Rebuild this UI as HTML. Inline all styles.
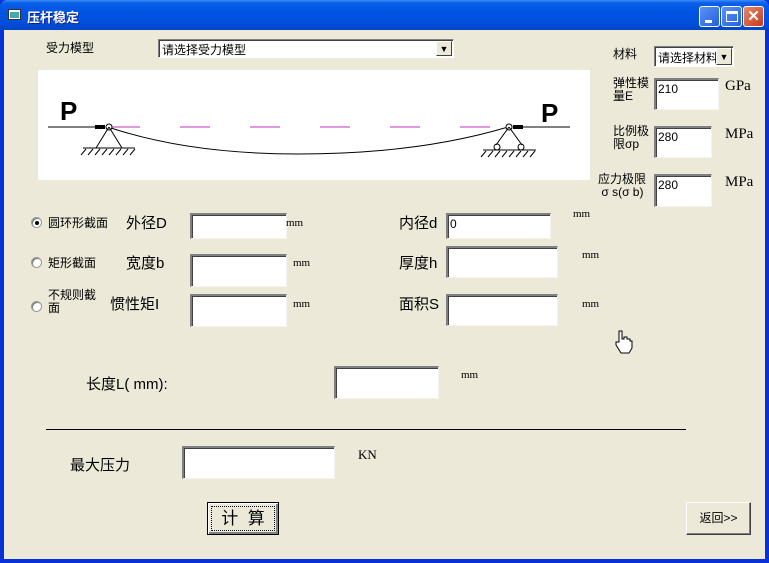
<!DOCTYPE html>
<html><head><meta charset="utf-8"><style>
*{margin:0;padding:0;box-sizing:border-box}
body{width:769px;height:563px;overflow:hidden;background:#0831d9;font-family:"Liberation Sans","Noto Sans CJK SC",sans-serif;font-size:12px;color:#000;position:relative}
#tb{position:absolute;left:0;top:0;width:769px;height:30px;background:linear-gradient(#3d8bf7 0,#0a5fe8 3px,#0054e3 12px,#0050dc 22px,#0344c6 30px);border-radius:7px 7px 0 0}
#tt{position:absolute;left:27px;top:7px;color:#fff;font-weight:bold;font-size:13px;text-shadow:1px 1px #0a1f8f}
#body{position:absolute;left:4px;top:30px;width:761px;height:529px;background:#ece9d8}
.a{position:absolute;white-space:nowrap}
.in{position:absolute;background:#fff;border-top:2px solid #808080;border-left:2px solid #808080;border-right:1px solid #f4f3ee;border-bottom:1px solid #f4f3ee;box-shadow:inset 1px 1px #404040;font-size:12px;padding:2px 0 0 2px}
.btn{position:absolute;width:21px;height:21px;border:1px solid #fff;border-radius:3px;background:linear-gradient(135deg,#5a92f5,#2460dc)}
.big{font-size:15px}
.sm{font-size:11px;font-family:"Liberation Serif",serif}
.rad{position:absolute;width:11px;height:11px;border-radius:50%;background:#fff;border:1px solid #999;box-shadow:inset 1px 1px #777}
.cb{position:absolute;background:#fff;border-top:1px solid #808080;border-left:1px solid #808080;border-bottom:1px solid #fff;border-right:1px solid #fff;box-shadow:inset 1px 1px #404040;padding:1px 3px;white-space:nowrap;overflow:hidden}
.dd{position:absolute;top:1px;right:1px;width:16px;bottom:1px;background:#ece9d8;border:1px solid;border-color:#fff #404040 #404040 #fff;font-size:9px;text-align:center;line-height:15px}
.pb{position:absolute;background:#ece9d8;border:1px solid;border-color:#fff #404040 #404040 #fff;box-shadow:inset -1px -1px #808080;text-align:center;white-space:nowrap}
</style></head><body>
<div id="tb">
<svg class="a" style="left:8px;top:9px" width="14" height="12"><rect x="0.5" y="0.5" width="12" height="10" fill="#fff" stroke="#333"/><rect x="2" y="3" width="9" height="6" fill="#4aa"/></svg>
<div id="tt">压杆稳定</div>
<div class="btn" style="left:699px;top:6px"><div style="position:absolute;left:5px;top:13px;width:7px;height:3px;background:#fff"></div></div>
<div class="btn" style="left:721px;top:6px"><div style="position:absolute;left:4px;top:4px;width:12px;height:11px;border:1px solid #fff;border-top-width:3px"></div></div>
<div class="btn" style="left:743px;top:6px;background:linear-gradient(135deg,#e88a6a,#c8391a);color:#fff;font-weight:bold;font-size:15px;text-align:center;line-height:19px">✕</div>
</div>
<div id="body"></div>
<div class="a" style="left:46px;top:39px">受力模型</div>
<div class="cb" style="left:158px;top:39px;width:296px;height:19px">请选择受力模型<div class="dd">▼</div></div>
<div class="a" style="left:613px;top:45px">材料</div>
<div class="cb" style="left:654px;top:46px;width:80px;height:21px;padding-top:2px">请选择材料<div class="dd" style="line-height:17px">▼</div></div>
<svg class="a" style="left:38px;top:70px" width="552" height="110">
<rect width="552" height="110" fill="#fff"/>
<text x="22" y="50" font-family="Liberation Sans" font-weight="bold" font-size="26">P</text>
<text x="503" y="52" font-family="Liberation Sans" font-weight="bold" font-size="26">P</text>
<line x1="10" y1="57" x2="60" y2="57" stroke="#000"/>
<rect x="57" y="55" width="10" height="4" fill="#000"/>
<line x1="532" y1="57" x2="482" y2="57" stroke="#000"/>
<rect x="475" y="55" width="10" height="4" fill="#000"/>
<line x1="72" y1="57" x2="470" y2="57" stroke="#c030c0" stroke-dasharray="30,40"/>
<path d="M70 57 Q150 84 260 84 Q380 84 470 57" fill="none" stroke="#000"/>
<circle cx="71" cy="57" r="3" fill="#fff" stroke="#000"/>
<circle cx="471" cy="57" r="3" fill="#fff" stroke="#000"/>
<path d="M71 57 L58 78 M71 57 L84 78 M45 78 H97" stroke="#000" fill="none"/>
<path d="M471 57 L458 75 M471 57 L484 75 M445 80 H498" stroke="#000" fill="none"/>
<circle cx="459" cy="77" r="3" fill="none" stroke="#000"/><circle cx="483" cy="77" r="3" fill="none" stroke="#000"/>
<path d="M48 79 l-5 6 M55 79 l-5 6 M62 79 l-5 6 M69 79 l-5 6 M76 79 l-5 6 M83 79 l-5 6 M90 79 l-5 6 M97 79 l-5 6 M448 81 l-5 6 M455 81 l-5 6 M462 81 l-5 6 M469 81 l-5 6 M476 81 l-5 6 M483 81 l-5 6 M490 81 l-5 6 M497 81 l-5 6" stroke="#000"/>
</svg>
<div class="a" style="left:613px;top:77px;line-height:13px">弹性模<br>量E</div>
<div class="in" style="left:654px;top:78px;width:65px;height:32px">210</div>
<div class="a big" style="left:725px;top:78px;font-family:'Liberation Serif',serif">GPa</div>
<div class="a" style="left:613px;top:125px;line-height:13px">比例极<br>限σp</div>
<div class="in" style="left:654px;top:126px;width:58px;height:32px">280</div>
<div class="a big" style="left:725px;top:126px;font-family:'Liberation Serif',serif">MPa</div>
<div class="a" style="left:598px;top:173px;line-height:13px">应力极限<br>&nbsp;σ s(σ b)</div>
<div class="in" style="left:654px;top:174px;width:58px;height:33px">280</div>
<div class="a big" style="left:725px;top:174px;font-family:'Liberation Serif',serif">MPa</div>

<div class="rad" style="left:31px;top:217px"><div style="position:absolute;left:3px;top:3px;width:4px;height:4px;border-radius:50%;background:#000"></div></div>
<div class="a" style="left:48px;top:214px">圆环形截面</div>
<div class="a big" style="left:126px;top:212px">外径D</div>
<div class="in" style="left:190px;top:213px;width:97px;height:26px"></div>
<div class="a sm" style="left:286px;top:217px">mm</div>
<div class="a big" style="left:399px;top:212px">内径d</div>
<div class="in" style="left:446px;top:213px;width:105px;height:26px">0</div>
<div class="a sm" style="left:573px;top:208px">mm</div>

<div class="rad" style="left:31px;top:257px"></div>
<div class="a" style="left:48px;top:254px">矩形截面</div>
<div class="a big" style="left:126px;top:252px">宽度b</div>
<div class="in" style="left:190px;top:254px;width:97px;height:33px"></div>
<div class="a sm" style="left:293px;top:257px">mm</div>
<div class="a big" style="left:399px;top:252px">厚度h</div>
<div class="in" style="left:446px;top:246px;width:112px;height:32px"></div>
<div class="a sm" style="left:582px;top:249px">mm</div>

<div class="rad" style="left:31px;top:301px"></div>
<div class="a" style="left:48px;top:289px;line-height:13px">不规则截<br>面</div>
<div class="a big" style="left:110px;top:293px">惯性矩I</div>
<div class="in" style="left:190px;top:294px;width:97px;height:33px"></div>
<div class="a sm" style="left:293px;top:298px">mm</div>
<div class="a big" style="left:399px;top:293px">面积S</div>
<div class="in" style="left:446px;top:294px;width:112px;height:32px"></div>
<div class="a sm" style="left:582px;top:298px">mm</div>

<svg class="a" style="left:614px;top:330px" width="20" height="24"><path d="M5 1 h3 v8 h2 v-2 h3 v2 h3 v2 h2 v7 l-3 5 h-8 l-5 -8 v-3 h3 z" fill="#fff" stroke="#000"/></svg>

<div class="a big" style="left:86px;top:373px">长度L( mm):</div>
<div class="in" style="left:334px;top:366px;width:105px;height:33px"></div>
<div class="a sm" style="left:461px;top:369px">mm</div>
<div class="a" style="left:46px;top:429px;width:640px;height:1px;background:#000"></div>
<div class="a big" style="left:70px;top:454px">最大压力</div>
<div class="in" style="left:182px;top:446px;width:153px;height:33px"></div>
<div class="a" style="left:358px;top:447px;font-family:'Liberation Serif',serif;font-size:13px">KN</div>
<div class="pb" style="left:207px;top:502px;width:72px;height:33px;border:1px solid #000;box-shadow:inset 1px 1px #fff,inset -2px -2px #808080"><div style="margin:3px;border:1px dotted #000;height:25px;line-height:23px;font-size:17px;white-space:nowrap">计&nbsp;&nbsp;算</div></div>
<div class="pb" style="left:686px;top:502px;width:65px;height:33px;line-height:31px">返回&gt;&gt;</div>
</body></html>
